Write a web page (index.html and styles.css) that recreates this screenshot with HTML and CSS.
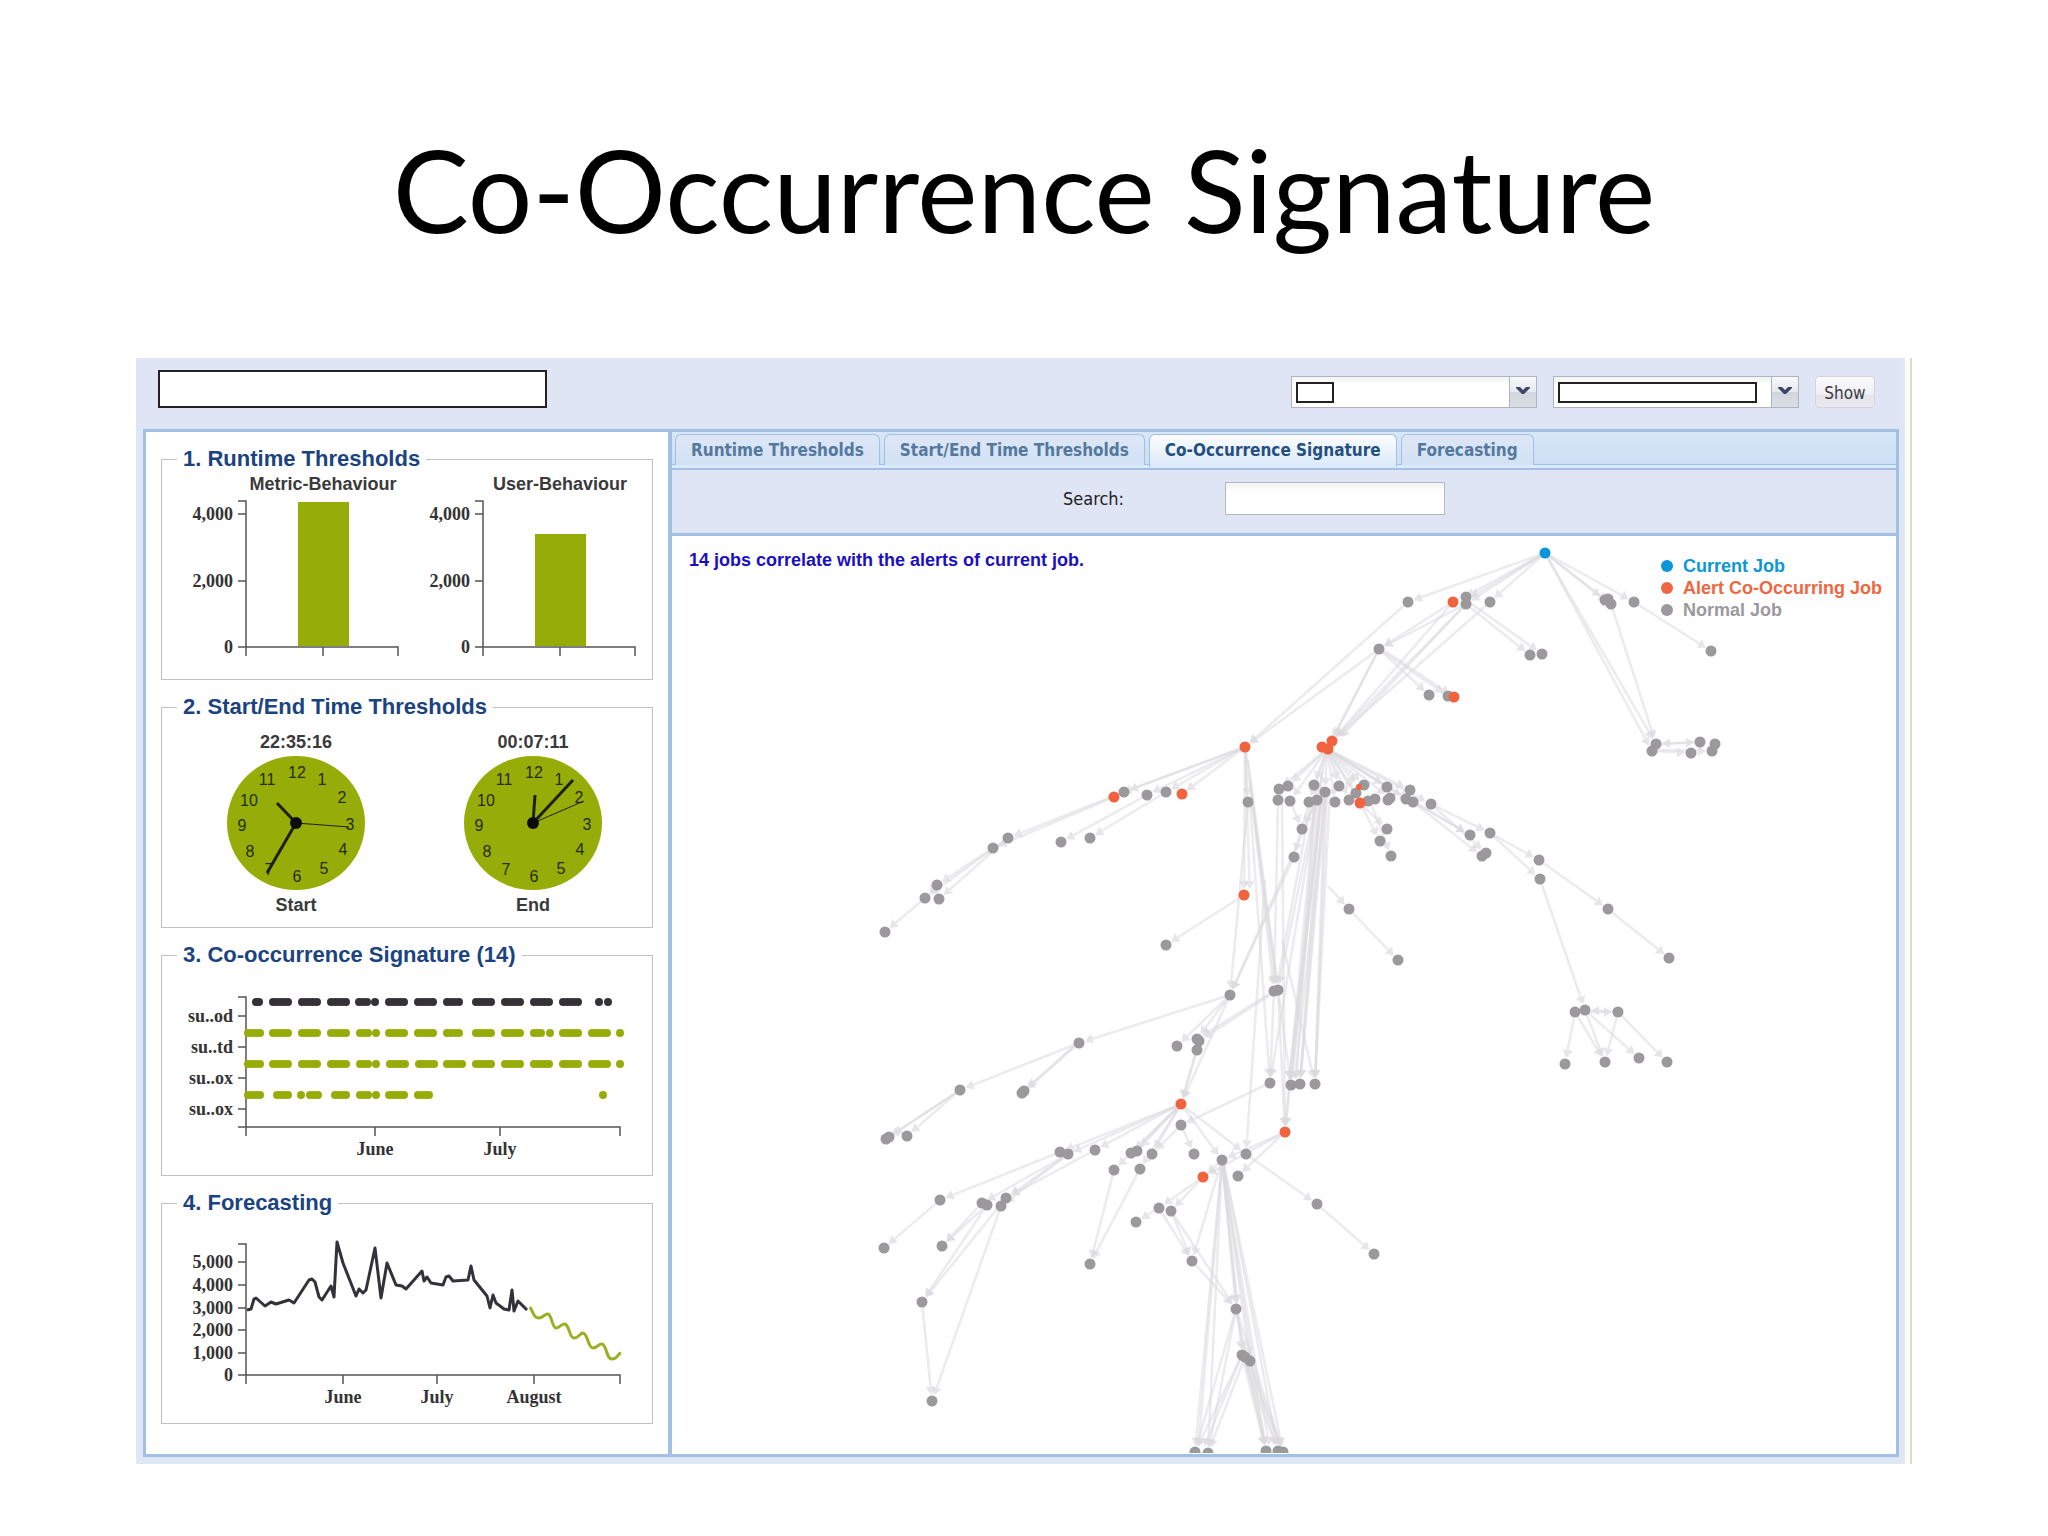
FILE: index.html
```html
<!DOCTYPE html>
<html lang="en">
<head>
<meta charset="utf-8">
<title>Co-Occurrence Signature</title>
<link rel="stylesheet" href="styles.css">
</head>
<body>
<header class="slide-title"><h1>Co-Occurrence Signature</h1></header>
<main class="app">
  <form class="toolbar">
    <input class="job-name" type="text" aria-label="Job name">
    <div class="combo">
      <select class="combo-select" aria-label="System"><option></option></select>
      <span class="combo-value combo-value-short"></span>
      <span class="combo-trigger"><svg viewBox="0 0 14 8"><path d="M0 0H4L7 3L10 0H14V1L8 7H6L0 1Z"/></svg></span>
    </div>
    <div class="combo">
      <select class="combo-select" aria-label="Job"><option></option></select>
      <span class="combo-value combo-value-long"></span>
      <span class="combo-trigger"><svg viewBox="0 0 14 8"><path d="M0 0H4L7 3L10 0H14V1L8 7H6L0 1Z"/></svg></span>
    </div>
    <button class="show" type="button">Show</button>
  </form>
  <div class="body">
    <aside class="overview">
      <fieldset class="card">
        <legend>1. Runtime Thresholds</legend>
        <svg class="chart" id="runtime" viewBox="162 473 490 206"></svg>
      </fieldset>
      <fieldset class="card">
        <legend>2. Start/End Time Thresholds</legend>
        <svg class="chart" id="clocks" viewBox="162 721 490 206"></svg>
      </fieldset>
      <fieldset class="card">
        <legend>3. Co-occurrence Signature (14)</legend>
        <svg class="chart" id="signature" viewBox="162 969 490 206"></svg>
      </fieldset>
      <fieldset class="card">
        <legend>4. Forecasting</legend>
        <svg class="chart" id="forecast" viewBox="162 1217 490 206"></svg>
      </fieldset>
    </aside>
    <section class="detail">
      <nav class="tabs">
        <a class="tab" href="#runtime">Runtime Thresholds</a>
        <a class="tab" href="#clocks">Start/End Time Thresholds</a>
        <a class="tab tab-active" href="#graph" aria-current="page">Co-Occurrence Signature</a>
        <a class="tab" href="#forecast">Forecasting</a>
      </nav>
      <div class="search">
        <label for="search">Search:</label>
        <input id="search" class="search-input" type="text">
      </div>
      <div class="canvas">
        <svg id="graph" class="graph" viewBox="672 536 1224 917"></svg>
        <p class="summary">14 jobs correlate with the alerts of current job.</p>
        <ul class="key">
          <li class="key-current">Current Job</li>
          <li class="key-alert">Alert Co-Occurring Job</li>
          <li class="key-normal">Normal Job</li>
        </ul>
      </div>
    </section>
  </div>
</main>
<script src="charts.js"></script>
</body>
</html>
```
FILE: styles.css
```css
* { box-sizing: border-box; }
body { margin: 0; background: #fff; font-family: "Liberation Sans", Arial, sans-serif; }

.slide-title { height: 358px; padding-top: 119px; text-align: center; }
.slide-title h1 { margin: 0; font: 400 114px/140px Lato, Carlito, sans-serif; color: #000; }

.app { margin: 0 136px 72px; padding: 0 13px 7px 7px; background: linear-gradient(90deg, transparent calc(100% - 7px), #fdfdfb calc(100% - 7px), #fdfdfb calc(100% - 2px), #dcdcd0 calc(100% - 2px)), #dfe7f7; }

.toolbar { height: 71px; margin: 0 0 0 -7px; padding: 12px 24px 0 22px; display: flex; gap: 16px; background: #e0e5f6; }
.job-name { width: 389px; height: 38px; margin: 0 auto 0 0; border: 2px solid #222; background: #fff; }
.combo { position: relative; width: 246px; height: 32px; margin-top: 6px; }
.combo-select { appearance: none; width: 100%; height: 100%; margin: 0; border: 1px solid #b0b4bd; border-radius: 0; background: linear-gradient(#f1f3f4, #fff 8px); }
.combo-value { position: absolute; top: 6px; left: 5px; height: 21px; border: 2px solid #222; background: #fff; pointer-events: none; }
.combo-value-short { width: 38px; }
.combo-value-long { width: 199px; }
.combo-trigger { position: absolute; top: 0; right: 0; width: 28px; height: 32px; padding-bottom: 2px; border: 1px solid #b0b4bd; display: grid; place-items: center; background: linear-gradient(#f7f8fa, #e8e9ef 50%, #d3d5dd 50%, #dcdee5); pointer-events: none; }
.combo-trigger svg { width: 14px; height: 8px; fill: #3d4568; }
.show { width: 60px; height: 32px; margin: 6px 0 0; padding: 2px 0 0; border: 1px solid #d3d5dc; border-radius: 4px; background: linear-gradient(#fafafb, #f1f1f5 55%, #e4e4ea 60%, #eaeaf0); font: 17px "DejaVu Sans Condensed", "Noto Sans", sans-serif; color: #3a3a44; }

.body { display: grid; grid-template-columns: 526px 1fr; border: 3px solid #a2bfe4; background: #fff; }
.overview { padding: 13px 15px 30px; border-right: 4px solid #a2bfe4; display: flex; flex-direction: column; gap: 13px; }
.card { min-width: 0; margin: 0; padding: 0; border: 1px solid #bfbfc6; }
.card legend { margin-left: 15px; padding: 0 6px; font: bold 22px/28px "Liberation Sans", Arial, sans-serif; color: #1a437f; }
.chart, .graph { display: block; width: 100%; height: auto; }
.chart { font: bold 18px "Liberation Serif", "Times New Roman", serif; fill: #333; }
.chart .axis { fill: none; stroke: #555; stroke-width: 1.5; }
.chart .title { font-family: "Liberation Sans", Arial, sans-serif; text-anchor: middle; fill: #3a3a3a; }
.chart .x { text-anchor: middle; }
.chart .y { text-anchor: end; }
.green { fill: #96ad09; }
.hour { font: 16px "Liberation Sans", Arial, sans-serif; text-anchor: middle; fill: #262b08; }
.hand { stroke: #1c2008; stroke-width: 3; }
.hand-second { stroke-width: 1; stroke: #1c2008; }
.hub { fill: #0c0c0c; }
.dark { fill: #343237; }
.history, .future { fill: none; stroke: #333238; stroke-width: 3; stroke-linejoin: round; }
.future { stroke: #9ab022; }

.tabs { display: flex; gap: 4px; height: 38px; padding: 2px 3px 0; background: linear-gradient(#d8e6f8, #cddff3 32px, #a2bfe4 32px, #a2bfe4 33px, #dbe9f9 33px, #dbe9f9 36px, #a2bfe4 36px); }
.tab { height: 31px; padding: 0 15px; border: 1px solid #a2bfe4; border-bottom: 0; border-radius: 6px 6px 0 0; background: linear-gradient(#dde6f6, #d3e2f5); font: bold 17px/30px "DejaVu Sans Condensed", "Noto Sans", sans-serif; color: #54799f; text-decoration: none; white-space: nowrap; }
.tab-active { height: 33px; background: linear-gradient(#fbfdff, #dbe9f9); color: #24507f; }
.search { height: 66px; padding: 12px 0 0 391px; display: flex; align-items: flex-start; border-bottom: 3px solid #a2bfe4; background: #dfe5f5; }
.search label { width: 162px; font: 18px/34px "DejaVu Sans Condensed", "Noto Sans", sans-serif; color: #222; }
.search-input { width: 220px; height: 33px; border: 1px solid #b3b8c0; background: linear-gradient(#f1f3f4, #fff 8px); }

.canvas { position: relative; }
.summary { position: absolute; left: 17px; top: 13px; margin: 0; font-weight: bold; font-size: 18px; line-height: 22px; color: #1c0fc0; }
.key { position: absolute; right: 12px; top: 19px; width: 206px; margin: 0; padding: 0; list-style: none; font-weight: bold; font-size: 18px; line-height: 22px; white-space: nowrap; }
.key li { position: relative; padding-left: 5px; }
.key li::before { content: ""; position: absolute; left: -17px; top: 5px; width: 12px; height: 12px; border-radius: 50%; background: currentColor; }
.key-current { color: #0a97d8; }
.key-alert { color: #ee6740; }
.key-normal { color: #9b999d; }
.edge { stroke: #dddbdf; stroke-width: 2.5; opacity: .55; }
.arrow { fill: #dcdade; opacity: .7; }
.node { fill: #9b999c; }
.node-alert { fill: #f0633e; }
.node-current { fill: #0a97d8; }
```
FILE: charts.js
```js
const NS = "http://www.w3.org/2000/svg";
function add(parent, tag, attrs, text) {
  const el = document.createElementNS(NS, tag);
  for (const k in attrs) el.setAttribute(k, attrs[k]);
  if (text !== undefined) el.textContent = text;
  parent.appendChild(el);
  return el;
}
const byId = id => document.getElementById(id);

// Axes shared by the small charts: left axis, bottom axis and their ticks.
function axes(svg, left, right, top, bottom, yTicks, xTicks) {
  let d = `M${left - 8} ${top}H${left}V${bottom + 9}M${left - 8} ${bottom}H${right}V${bottom + 9}`;
  for (const [y, label] of yTicks) {
    d += `M${left - 8} ${y}H${left}`;
    add(svg, "text", { class: "y", x: left - 13, y: y + 6 }, label);
  }
  for (const [x, label] of xTicks) {
    d += `M${x} ${bottom}V${bottom + 9}`;
    add(svg, "text", { class: "x", x, y: bottom + 28 }, label);
  }
  add(svg, "path", { class: "axis", d });
}

// Runtime thresholds
const rt = byId("runtime");
[[246, 323, "Metric-Behaviour", 502], [483, 560, "User-Behaviour", 534]].forEach(([left, mid, name, top]) => {
  add(rt, "text", { class: "title", x: mid, y: 490 }, name);
  axes(rt, left, left + 152, 501, 647, [[514, "4,000"], [581, "2,000"], [647, "0"]], [[mid, ""]]);
  add(rt, "rect", { class: "green", x: mid - 25, y: top, width: 51, height: 646 - top });
});

// Start and end clocks
const hours = [[1,-51],[26,-44],[46,-26],[54,1],[47,26],[28,45],[1,53],[-27,46],[-46,28],[-54,2],[-47,-23],[-29,-44]];
[[296, "22:35:16", "Start", [-19,-20], [-29,50], [53,4]], [533, "00:07:11", "End", [2,-28], [40,-43], [51,-22]]].forEach(([cx, time, name, h, m, s]) => {
  const svg = byId("clocks"), cy = 823;
  add(svg, "text", { class: "title", x: cx, y: 748 }, time);
  add(svg, "ellipse", { class: "green", cx, cy, rx: 69, ry: 67 });
  hours.forEach(([x, y], i) => add(svg, "text", { class: "hour", x: cx + x, y: cy + y + 6 }, i || 12));
  for (const [v, c] of [[h, "hand"], [m, "hand"], [s, "hand-second"]])
    add(svg, "line", { class: c, x1: cx, y1: cy, x2: cx + v[0], y2: cy + v[1] });
  add(svg, "circle", { class: "hub", cx, cy, r: 6 });
  add(svg, "text", { class: "title", x: cx, y: 911 }, name);
});

// Alert occurrences of the correlated jobs, as [first, last] runs
const sig = byId("signature");
axes(sig, 246, 620, 997, 1127, [[1016, "su..od"], [1047, "su..td"], [1078, "su..ox"], [1109, "su..ox"]], [[375, "June"], [500, "July"]]);
const runs = [
  [1002, "dark", [[256,259],[273,288],[302,317],[331,346],[359,367],[375,375],[389,404],[418,433],[447,459],[476,491],[505,520],[534,549],[563,578],[599,599],[608,608]]],
  [1033, "green", [[248,260],[273,288],[302,317],[331,346],[360,368],[376,376],[389,404],[418,433],[447,459],[476,491],[505,520],[534,541],[550,550],[563,578],[592,607],[620,620]]],
  [1064, "green", [[248,260],[273,288],[302,317],[331,346],[360,368],[376,376],[390,405],[419,434],[447,462],[476,491],[505,520],[534,549],[563,578],[592,607],[620,620]]],
  [1095, "green", [[248,260],[277,288],[301,301],[310,318],[335,346],[360,368],[376,376],[389,404],[418,429],[603,603]]]
];
for (const [y, cls, list] of runs)
  for (const [a, b] of list) {
    const n = Math.round((b - a) / 4);
    for (let i = 0; i <= n; i++) add(sig, "circle", { class: cls, cx: a + (n ? (b - a) * i / n : 0), cy: y, r: 4 });
  }

// Forecast
const fc = byId("forecast");
axes(fc, 246, 620, 1244, 1375, [[1262, "5,000"], [1285, "4,000"], [1308, "3,000"], [1330, "2,000"], [1353, "1,000"], [1375, "0"]], [[343, "June"], [437, "July"], [534, "August"]]);
const past = [[247,1310],[251,1309],[254,1299],[256,1298],[265,1306],[271,1302],[276,1304],[289,1300],[294,1303],[309,1280],[312,1279],[315,1282],[319,1297],[322,1300],[331,1286],[334,1297],[337,1242],[343,1263],[356,1296],[359,1289],[363,1293],[366,1290],[375,1248],[381,1298],[387,1263],[396,1285],[402,1286],[406,1289],[422,1271],[424,1281],[427,1277],[431,1283],[443,1285],[446,1277],[449,1276],[453,1281],[468,1280],[471,1266],[474,1280],[487,1296],[490,1308],[493,1295],[496,1303],[504,1309],[509,1310],[512,1290],[514,1311],[518,1301],[527,1310]];
const future = "M530 1307C534 1314 534 1318 539 1318S545 1313 548 1314C552 1315 552 1328 556 1328S562 1323 565 1324C570 1326 569 1338 574 1338S580 1333 583 1333C588 1334 588 1348 593 1348S599 1343 602 1344C607 1345 606 1359 612 1359S617 1354 621 1353";
add(fc, "polyline", { class: "history", points: past.join(" ") });
add(fc, "path", { class: "future", d: future });

// Job dependency graph: edges are x1, y1, x2, y2
const graph = byId("graph");
const edges = [
  [1545,553,1408,602],[1545,553,1466,600],[1545,553,1461,599],[1545,553,1466,604],[1545,553,1490,602],[1545,553,1605,600],[1545,553,1611,604],[1545,553,1634,602],
  [1545,553,1656,744],[1545,553,1652,751],[1611,604,1656,744],[1634,602,1711,651],
  [1656,744,1700,742],[1700,742,1656,744],[1652,751,1691,753],[1656,750,1712,751],
  [1466,604,1530,655],[1466,600,1542,654],[1453,602,1379,649],[1466,604,1379,649],
  [1408,602,1245,747],[1379,649,1245,747],[1379,649,1332,741],[1379,649,1330,743],[1466,604,1332,741],[1466,604,1337,741],[1490,602,1332,741],[1453,602,1332,741],
  [1379,649,1429,695],[1379,649,1448,696],[1385,651,1454,697],
  [1245,747,1124,792],[1245,747,1118,794],[1245,747,1147,795],[1245,747,1166,792],[1245,747,1182,794],[1124,792,1008,838],[1114,797,993,848],[1147,795,1061,842],[1166,792,1090,838],
  [993,848,937,885],[1008,838,939,899],[1008,838,925,898],[925,898,885,932],[937,885,925,898],
  [1245,747,1248,802],[1245,747,1244,895],[1245,747,1250,895],[1248,802,1230,995],[1244,895,1166,945],
  [1246,750,1274,991],[1248,760,1278,990],[1250,780,1276,990],[1252,800,1278,990],[1278,802,1274,990],[1282,802,1285,1132],
  [1327,749,1279,789],[1327,749,1288,786],[1327,749,1290,801],[1327,749,1314,785],[1327,749,1309,802],[1327,749,1317,800],[1327,749,1325,792],[1327,749,1339,786],[1327,749,1335,802],[1327,749,1349,800],[1327,749,1356,793],[1327,749,1364,785],[1327,749,1359,787],[1327,749,1360,803],[1327,749,1387,787],[1327,749,1390,798],[1327,749,1410,790],[1327,749,1406,799],[1327,749,1413,802],[1327,749,1431,804],
  [1290,801,1302,829],[1317,800,1302,829],[1309,802,1294,857],[1294,857,1230,995],[1317,800,1230,995],
  [1360,803,1387,829],[1360,803,1380,841],[1370,801,1391,856],[1410,799,1470,835],[1413,802,1470,835],[1431,804,1490,833],[1413,802,1482,856],[1431,804,1486,853],
  [1490,833,1539,860],[1490,833,1540,879],[1539,860,1608,909],[1608,909,1669,958],[1540,879,1585,1010],[1328,886,1349,909],[1349,909,1398,960],
  [1575,1012,1618,1012],[1618,1012,1585,1010],[1575,1012,1565,1064],[1575,1012,1605,1062],[1585,1010,1605,1062],[1618,1012,1605,1062],[1585,1010,1639,1058],[1618,1012,1667,1062],
  [1317,800,1270,1083],[1311,802,1276,990],[1315,802,1285,1132],[1318,802,1285,1132],[1320,802,1291,1085],[1322,792,1291,1085],[1324,792,1300,1084],[1326,792,1300,1084],[1327,792,1315,1084],[1330,792,1315,1084],[1326,792,1294,1085],[1323,792,1288,1085],[1325,792,1315,1084],[1318,792,1278,990],[1322,770,1300,1084],[1316,780,1296,1085],
  [1274,991,1270,1083],[1278,990,1291,1085],[1250,802,1270,1083],[1265,880,1246,1154],[1278,990,1285,1132],[1282,940,1315,1084],
  [1230,995,1079,1043],[1230,995,1177,1046],[1230,995,1181,1104],[1230,995,1197,1039],[1274,991,1197,1039],[1278,990,1199,1041],[1199,1041,1181,1104],[1197,1050,1181,1104],
  [1079,1043,960,1090],[1079,1043,1022,1093],[1076,1044,1024,1091],[960,1090,889,1137],[960,1090,907,1136],[960,1090,886,1139],
  [1181,1104,1060,1152],[1181,1104,1068,1154],[1181,1104,1095,1150],[1181,1104,1131,1153],[1181,1104,1137,1151],[1181,1104,1152,1154],[1181,1104,1114,1170],[1181,1104,1140,1169],[1181,1125,1194,1154],[1181,1104,1222,1160],[1181,1104,1246,1154],[1270,1083,1181,1125],[1181,1125,1152,1154],
  [1285,1132,1238,1176],[1285,1132,1203,1177],[1285,1132,1222,1160],[1246,1154,1317,1204],[1317,1204,1374,1254],
  [1060,1152,940,1200],[1068,1154,982,1203],[1068,1154,1006,1198],[1095,1150,1006,1198],[1068,1154,1001,1206],[940,1200,884,1248],[987,1205,942,1246],[982,1203,942,1246],[1006,1198,922,1302],[987,1205,922,1302],[1001,1206,932,1401],[922,1302,932,1401],
  [1114,1170,1090,1264],[1140,1169,1090,1264],[1203,1177,1159,1208],[1203,1177,1171,1211],[1159,1208,1136,1222],[1171,1211,1192,1261],[1159,1208,1192,1261],[1222,1160,1192,1261],[1222,1160,1203,1177],[1192,1261,1236,1309],[1171,1211,1236,1309],
  [1222,1160,1236,1309],[1222,1160,1238,1309],[1222,1160,1242,1355],[1222,1160,1250,1361],[1222,1160,1195,1452],[1222,1160,1208,1453],[1222,1160,1198,1452],[1222,1160,1266,1451],[1224,1165,1278,1451],[1224,1165,1283,1452],[1222,1160,1270,1451],
  [1236,1309,1195,1452],[1236,1309,1208,1453],[1236,1309,1245,1357],[1242,1355,1195,1452],[1245,1357,1208,1453],[1242,1355,1202,1452],
  [1242,1355,1266,1451],[1245,1357,1266,1451],[1250,1361,1266,1451],[1236,1309,1266,1451],[1250,1361,1278,1451],[1242,1355,1278,1451],[1250,1361,1283,1452],[1245,1357,1283,1452],[1236,1309,1283,1452]
];
for (const [x1, y1, x2, y2] of edges) {
  const len = Math.hypot(x2 - x1, y2 - y1), ux = (x2 - x1) / len, uy = (y2 - y1) / len;
  const tx = x2 - ux * 6, ty = y2 - uy * 6, bx = x2 - ux * 14, by = y2 - uy * 14;
  add(graph, "line", { class: "edge", x1, y1, x2: bx, y2: by });
  add(graph, "polygon", { class: "arrow", points: `${tx},${ty} ${bx - uy * 5},${by + ux * 5} ${bx + uy * 5},${by - ux * 5}` });
}
const normal = [
  [1408,602],[1466,597],[1466,604],[1490,602],[1605,600],[1608,599],[1611,604],[1634,602],[1379,649],[1530,655],[1542,654],[1711,651],[1656,744],[1652,751],[1700,742],[1691,753],[1715,744],[1712,751],
  [1429,695],[1448,696],[1248,802],[1279,789],[1288,786],[1278,800],[1290,801],[1314,785],[1325,792],[1309,802],[1317,800],[1339,786],[1335,802],[1349,800],[1356,793],[1364,785],[1368,801],[1375,799],[1387,787],[1390,798],[1388,800],[1410,790],[1406,799],[1413,802],[1431,804],
  [1302,829],[1294,857],[1387,829],[1380,841],[1391,856],[1470,835],[1490,833],[1486,853],[1482,856],[1349,909],[1398,960],[1166,945],[1539,860],[1540,879],[1608,909],[1669,958],[1575,1012],[1585,1010],[1618,1012],[1565,1064],[1605,1062],[1639,1058],[1667,1062],
  [1124,792],[1147,795],[1166,792],[1008,838],[993,848],[1061,842],[1090,838],[937,885],[925,898],[939,899],[885,932],[1230,995],[1274,991],[1278,990],[1079,1043],[1177,1046],[1197,1039],[1199,1041],[1197,1050],[960,1090],[1022,1093],[1024,1091],[886,1139],[889,1137],[907,1136],
  [1181,1125],[1270,1083],[1291,1085],[1300,1084],[1315,1084],[1060,1152],[1068,1154],[1095,1150],[1131,1153],[1137,1151],[1152,1154],[1194,1154],[1114,1170],[1140,1169],[1222,1160],[1246,1154],[1238,1176],[940,1200],[982,1203],[987,1205],[1006,1198],[1001,1206],[1159,1208],[1171,1211],[1136,1222],[884,1248],[942,1246],[1317,1204],
  [1090,1264],[1192,1261],[1374,1254],[922,1302],[932,1401],[1236,1309],[1242,1355],[1245,1357],[1250,1361],[1195,1452],[1208,1453],[1266,1451],[1278,1451],[1283,1452]
];
const alerts = [[1453,602],[1454,697],[1245,747],[1332,741],[1322,747],[1328,749],[1114,797],[1182,794],[1360,803],[1244,895],[1181,1104],[1285,1132],[1203,1177]];
for (const [cx, cy] of normal) add(graph, "circle", { class: "node", cx, cy, r: 5.5 });
for (const [cx, cy] of alerts) add(graph, "circle", { class: "node-alert", cx, cy, r: 5.5 });
add(graph, "circle", { class: "node-alert", cx: 1359, cy: 787, r: 3 });
add(graph, "circle", { class: "node-current", cx: 1545, cy: 553, r: 5.5 });
```
